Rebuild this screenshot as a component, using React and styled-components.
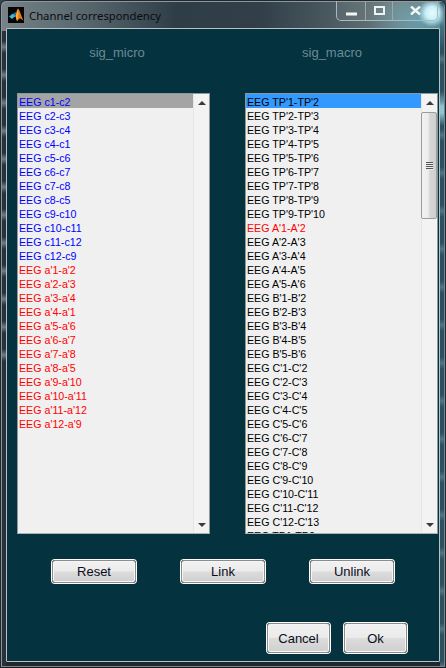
import React from "react";
import styled, { createGlobalStyle } from "styled-components";

const Global = createGlobalStyle`
  html, body { margin: 0; padding: 0; background: #3a4a50; }
  * { box-sizing: border-box; }
`;

const Window = styled.div`
  width: 446px;
  height: 668px;
  display: flex;
  flex-direction: column;
  padding: 0 5px 5px;
  border-radius: 6px 6px 0 0;
  border: 1px solid #20282c;
  border-bottom-color: #14191c;
  box-shadow: inset 1px 1px 0 #8b979c, inset -1px -1px 0 #7b878c;
  font-family: "Liberation Sans", Arial, sans-serif;
  background:
    radial-gradient(circle 14px at 431px 12px, #e8fbff 0%, #c5f1f9 45%, rgba(150, 215, 230, 0) 100%),
    radial-gradient(ellipse 55px 30px at 420px 20px, rgba(100, 190, 210, .55), rgba(100, 190, 210, 0)),
    linear-gradient(180deg, rgba(0,0,0,0) 0 95px, #8fc4d4 105px 112px, rgba(0,0,0,0) 125px) right top / 5px 100% no-repeat,
    repeating-linear-gradient(180deg, #2c5060 0 14px, #4d7684 20px, #2c5060 26px 38px) right top / 5px 100% no-repeat,
    linear-gradient(180deg, #27323a, #27323a) left 360px / 5px 308px no-repeat,
    repeating-linear-gradient(180deg, #28323a 0 10px, #6d7c86 16px, #28323a 22px 28px) left 30px / 5px 340px no-repeat,
    linear-gradient(180deg, #1f282e, #1f282e) left bottom / 100% 6px no-repeat,
    linear-gradient(90deg, #78848a 0, #6a787e 30px, #56646c 90px, #2f3d47 175px, #323f49 260px, #4a5a60 330px, #6c7c80 400px, #587278 446px);
`;

const TitleBar = styled.div`
  height: 27px;
  flex: none;
  display: flex;
  align-items: flex-start;
  gap: 5px;
  padding: 6px 0 0 2px;
  color: #0a0d10;
`;

const Logo = styled.svg`
  width: 16px;
  height: 16px;
  flex: none;
  display: block;
`;

const Title = styled.div`
  font-family: "Noto Sans", "Open Sans", sans-serif;
  font-size: 11.3px;
  line-height: 18px;
  white-space: nowrap;
`;

const Controls = styled.div`
  margin-left: auto;
  margin-top: -6px;
  margin-right: 2px;
  width: 102px;
  height: 20px;
  flex: none;
  display: grid;
  grid-template-columns: 29px 27px 1fr;
  border: 1px solid #aeb8bc;
  border-top: 0;
  border-radius: 0 0 5px 5px;
  background: rgba(255, 255, 255, .06);
`;

const ControlButton = styled.div`
  display: flex;
  align-items: center;
  justify-content: center;
  padding-top: ${(p) => p.$drop || 0}px;
  border-right: ${(p) => (p.$last ? "0" : "1px solid #9ca8ac")};
  svg { display: block; }
`;

const Client = styled.div`
  flex: 1;
  display: flex;
  flex-direction: column;
  background: #04323f;
  border: 1px solid #b9c1c4;
  border-radius: 1px;
`;

const Heads = styled.div`
  height: 64px;
  flex: none;
  display: flex;
  gap: 115px;
  padding: 15px 0 0 60px;
`;

const Head = styled.div`
  width: 100px;
  text-align: center;
  color: #6b8b95;
  font-size: 13px;
  line-height: 17px;
`;

const Lists = styled.div`
  display: flex;
  gap: 35px;
  padding-left: 10px;
  flex: none;
`;

const ListBox = styled.div`
  width: 193px;
  height: 441px;
  display: flex;
  background: #f0f0f0;
  border: 1px solid #8d989c;
  border-bottom-color: #aab2b5;
  overflow: hidden;
`;

const Rows = styled.div`
  flex: 1;
  min-width: 0;
  overflow: hidden;
`;

const Row = styled.div`
  height: 14px;
  line-height: 16px;
  padding-left: 1px;
  font-size: 10.67px;
  white-space: nowrap;
  color: ${(p) => p.$color};
  background: ${(p) => p.$bg || "transparent"};
`;

const Scrollbar = styled.div`
  width: 16px;
  flex: none;
  display: flex;
  flex-direction: column;
  background: #f3f3f3;
  border-left: 1px solid #e6e6e6;
`;

const Arrow = styled.div`
  height: 17px;
  flex: none;
  display: flex;
  align-items: center;
  justify-content: center;
  &::before {
    content: "";
    width: 0;
    height: 0;
    border-left: 4px solid transparent;
    border-right: 4px solid transparent;
    ${(p) => (p.$down ? "border-top: 4px solid #3a3a3a;" : "border-bottom: 4px solid #3a3a3a;")}
  }
`;

const Track = styled.div`
  flex: 1;
  min-height: 0;
`;

const Thumb = styled.div`
  height: 107px;
  margin: 1px 0 0 -1px;
  width: 16px;
  display: flex;
  align-items: center;
  justify-content: center;
  border: 1px solid #9c9c9c;
  border-radius: 2px;
  background: linear-gradient(90deg, #f2f2f2 0, #ececec 45%, #d6d6d6 55%, #cfcfcf 100%);
`;

const Grip = styled.div`
  width: 7px;
  height: 8px;
  background: repeating-linear-gradient(180deg, #555 0, #555 1px, #eee 1px, #eee 2px);
`;

const ActionRow = styled.div`
  margin-top: 25px;
  display: flex;
  gap: 43px;
  padding-left: 44px;
  flex: none;
`;

const DialogRow = styled.div`
  margin-top: 38px;
  display: flex;
  justify-content: flex-end;
  gap: 12px;
  padding-right: 31px;
  flex: none;
`;

const Button = styled.button`
  width: ${(p) => p.$w}px;
  height: ${(p) => p.$h}px;
  margin: 1px;
  padding: 0;
  font-family: inherit;
  font-size: 13px;
  color: #0c0c20;
  border: 1px solid #8c8c8c;
  border-radius: 3px;
  box-shadow: 0 0 0 1px #fff, inset 0 0 0 1px #f6f6f6;
  background: linear-gradient(180deg, #f2f2f2 0, #ebebeb 48%, #dcdcdc 52%, #cfcfcf 100%);
`;

const micro = [
  "c1-c2", "c2-c3", "c3-c4", "c4-c1", "c5-c6", "c6-c7", "c7-c8", "c8-c5", "c9-c10", "c10-c11", "c11-c12", "c12-c9",
].map((t) => ({ t: "EEG " + t, c: "#0000ff" }));
const microA = [
  "a'1-a'2", "a'2-a'3", "a'3-a'4", "a'4-a'1", "a'5-a'6", "a'6-a'7", "a'7-a'8", "a'8-a'5", "a'9-a'10", "a'10-a'11", "a'11-a'12", "a'12-a'9",
].map((t) => ({ t: "EEG " + t, c: "#ff0000" }));
const left = [...micro, ...microA];

const seq = (p, a, b) => {
  const out = [];
  for (let i = a; i <= b; i++) out.push(`${p}${i}-${p}${i + 1}`);
  return out;
};
const right = [
  ...seq("TP'", 1, 9),
  ...seq("A'", 1, 5),
  ...seq("B'", 1, 5),
  ...seq("C'", 1, 12),
  "TP1-TP2",
].map((t) => ({ t: "EEG " + t, c: t === "A'1-A'2" ? "#ff0000" : "#000000" }));

function ListPanel({ items, selBg, thumb }) {
  return (
    <ListBox>
      <Rows>
        {items.map((it, i) => (
          <Row key={it.t} $color={it.c} $bg={i === 0 ? selBg : undefined}>
            {it.t}
          </Row>
        ))}
      </Rows>
      <Scrollbar>
        <Arrow />
        <Track>
          {thumb && (
            <Thumb>
              <Grip />
            </Thumb>
          )}
        </Track>
        <Arrow $down />
      </Scrollbar>
    </ListBox>
  );
}

export default function App() {
  return (
    <>
      <Global />
      <Window>
        <TitleBar>
          <Logo viewBox="0 0 16 16">
            <rect width="16" height="16" fill="#060606" />
            <path d="M1 9.500 5 6.500l2.500 2.500-3.500 3z" fill="#38b6e8" />
            <path d="M5 6.500 8 5l1.500-3L7.500 9z" fill="#1f6f9f" />
            <path d="M7.500 9 10 1.500c1.500 1 3.500 8.500 5.500 12-1.500-.5-2.500-2.500-4-2-1 .5-1.500 2-2.500 2.500z" fill="#ee7a1c" />
            <path d="M10 1.500 7.500 9l1.500 5c1-1.500 1.500-7 1-12.500z" fill="#f8b030" />
          </Logo>
          <Title>Channel correspondency</Title>
          <Controls>
            <ControlButton $drop={6}>
              <svg width="11" height="4" viewBox="0 0 11 4">
                <rect width="11" height="3" y="0.5" fill="#f4f6f6" />
              </svg>
            </ControlButton>
            <ControlButton>
              <svg width="11" height="9" viewBox="0 0 11 9">
                <rect x="1" y="1" width="9" height="7" fill="none" stroke="#eef2f2" strokeWidth="2" />
              </svg>
            </ControlButton>
            <ControlButton $last>
              <svg width="11" height="9" viewBox="0 0 11 9">
                <path d="M1 .5 10 8.500M10 .5 1 8.500" stroke="#f4f6f6" strokeWidth="2.400" fill="none" />
              </svg>
            </ControlButton>
          </Controls>
        </TitleBar>
        <Client>
          <Heads>
            <Head>sig_micro</Head>
            <Head>sig_macro</Head>
          </Heads>
          <Lists>
            <ListPanel items={left} selBg="#a4a4a4" />
            <ListPanel items={right} selBg="#3399ff" thumb />
          </Lists>
          <ActionRow>
            <Button $w={84} $h={23}>Reset</Button>
            <Button $w={84} $h={23}>Link</Button>
            <Button $w={84} $h={23}>Unlink</Button>
          </ActionRow>
          <DialogRow>
            <Button $w={63} $h={30}>Cancel</Button>
            <Button $w={63} $h={30}>Ok</Button>
          </DialogRow>
        </Client>
      </Window>
    </>
  );
}
